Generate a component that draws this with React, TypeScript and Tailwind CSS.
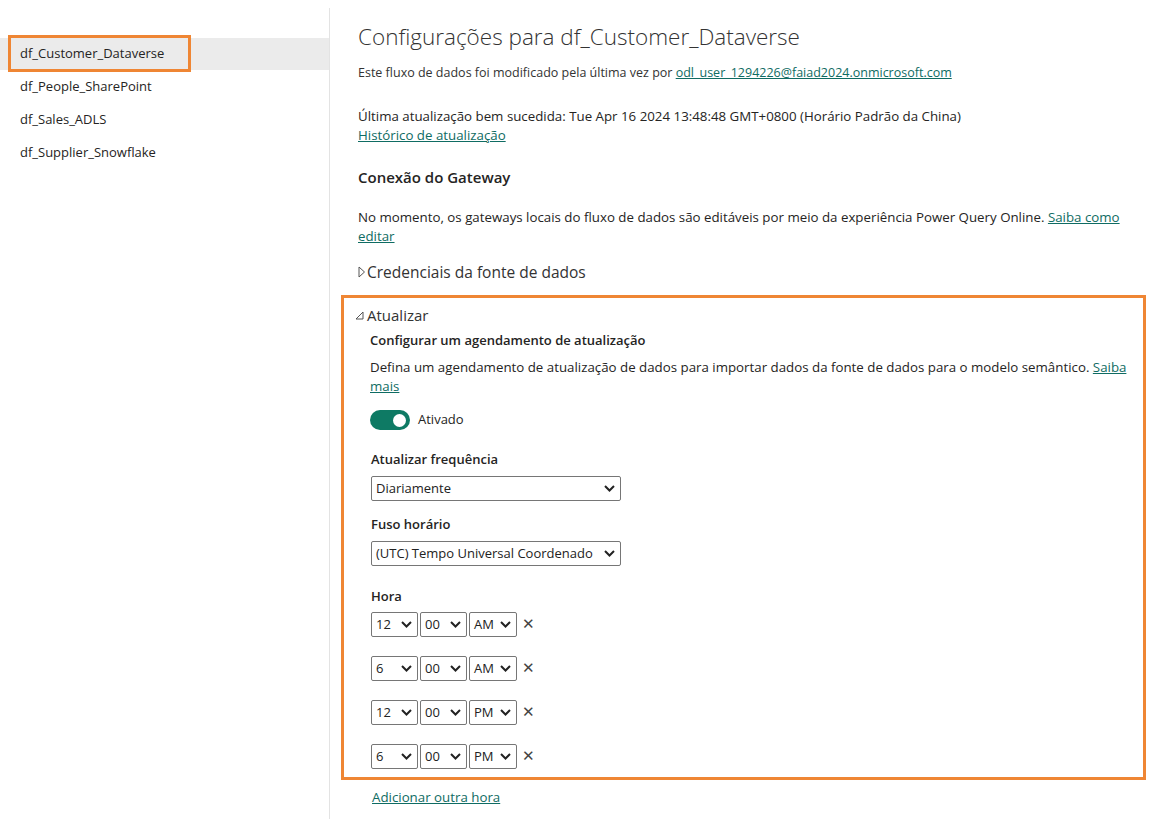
import React from "react";

const font = { fontFamily: '"Segoe UI", "Open Sans", "Noto Sans", sans-serif' };

function Chevron() {
  return (
    <svg width="11" height="7" viewBox="0 0 11 7" className="shrink-0">
      <path d="M1 1 L5.5 5.5 L10 1" fill="none" stroke="#222" strokeWidth="2" />
    </svg>
  );
}

function Sel({ value, w }: { value: string; w: string }) {
  return (
    <div className={`${w} h-[25px] border border-[#767676] rounded-[2px] flex items-center justify-between pl-[4px] pr-[5px] text-[13px] text-[#222] bg-white`}>
      <span>{value}</span>
      <Chevron />
    </div>
  );
}

function TimeRow({ h, p }: { h: string; p: string }) {
  return (
    <div className="flex items-center gap-[2px] h-[25px]">
      <Sel value={h} w="w-[47px]" />
      <Sel value="00" w="w-[47px]" />
      <Sel value={p} w="w-[48px]" />
      <span className="ml-[3px] text-[15px] text-[#444] leading-none -mt-[3px]">✕</span>
    </div>
  );
}

export default function App() {
  const link = "text-[#0f6c63] underline";
  return (
    <div style={font} className="flex w-[1158px] h-[819px] bg-white overflow-hidden text-[#252423]">
      <aside className="w-[330px] shrink-0 relative">
        <div className="absolute right-0 top-[8px] bottom-0 w-px bg-[#e3e3e3]" />
        <div className="pt-[38px] text-[13px] text-[#252423]">
          <div className="h-[32px] bg-[#ebebeb] flex items-center pl-[20px] mr-px">df_Customer_Dataverse</div>
          <div className="h-[33px] flex items-center pl-[20px]">df_People_SharePoint</div>
          <div className="h-[33px] flex items-center pl-[20px]">df_Sales_ADLS</div>
          <div className="h-[33px] flex items-center pl-[20px]">df_Supplier_Snowflake</div>
        </div>
        <div className="absolute left-[8px] top-[35px] w-[183px] h-[37px] border-[3px] border-[#ef8634]" />
      </aside>
      <main className="flex-1 pl-[28px] pr-[30px]">
        <h1 className="text-[22.5px] font-light text-[#333] mt-[22px] leading-[30px]">Configurações para df_Customer_Dataverse</h1>
        <p className="text-[12.5px] mt-[13px] leading-[16px] text-[#333]">
          Este fluxo de dados foi modificado pela última vez por <span className={link}>odl_user_1294226@faiad2024.onmicrosoft.com</span>
        </p>
        <p className="text-[13.3px] mt-[26px] leading-[19px]">
          Última atualização bem sucedida: Tue Apr 16 2024 13:48:48 GMT+0800 (Horário Padrão da China)
        </p>
        <p className={`text-[13.3px] leading-[19px] ${link}`}>Histórico de atualização</p>
        <h2 className="text-[15px] font-semibold mt-[22px] leading-[20px]">Conexão do Gateway</h2>
        <div className="text-[13.3px] mt-[21px] leading-[19px]">
          <p className="whitespace-nowrap">
            No momento, os gateways locais do fluxo de dados são editáveis por meio da experiência Power Query Online. <span className={link}>Saiba como</span>
          </p>
          <p className={link}>editar</p>
        </div>
        <div className="flex items-center mt-[16px] text-[15.5px] leading-[20px] text-[#333]">
          <svg width="8" height="12" viewBox="0 0 8 12" className="mr-[1px]">
            <path d="M1 1 L6.5 6 L1 11 Z" fill="none" stroke="#555" strokeWidth="1" />
          </svg>
          <span>Credenciais da fonte de dados</span>
        </div>
        <section className="-ml-[17px] mt-[13px] w-[805px] h-[485px] border-[3px] border-[#ef8634] pl-[11px] pr-[12px]">
          <div className="flex items-center mt-[7px] text-[15px] leading-[20px] text-[#333]">
            <svg width="9" height="9" viewBox="0 0 9 9" className="mr-[3px]">
              <path d="M8 1 L8 8 L1 8 Z" fill="none" stroke="#555" strokeWidth="1" />
            </svg>
            <span>Atualizar</span>
          </div>
          <div className="pl-[15px]">
            <h3 className="text-[13px] font-semibold mt-[6px] leading-[18px]">Configurar um agendamento de atualização</h3>
            <div className="text-[13.3px] mt-[9px] leading-[19px]">
              <p className="whitespace-nowrap">
                Defina um agendamento de atualização de dados para importar dados da fonte de dados para o modelo semântico. <span className={link}>Saiba</span>
              </p>
              <p className={link}>mais</p>
            </div>
            <div className="flex items-center mt-[14px] h-[20px]">
              <div className="w-[40px] h-[20px] rounded-full bg-[#0e7a64] flex items-center justify-end pr-[4px]">
                <div className="w-[13px] h-[13px] rounded-full bg-white" />
              </div>
              <span className="ml-[8px] text-[13px]">Ativado</span>
            </div>
            <div className="pl-[1px]">
              <h4 className="text-[13px] font-semibold mt-[20px] leading-[18px]">Atualizar frequência</h4>
              <div className="mt-[8px]"><Sel value="Diariamente" w="w-[250px]" /></div>
              <h4 className="text-[13px] font-semibold mt-[14px] leading-[18px]">Fuso horário</h4>
              <div className="mt-[8px]"><Sel value="(UTC) Tempo Universal Coordenado" w="w-[250px]" /></div>
              <h4 className="text-[13px] font-semibold mt-[21px] leading-[18px]">Hora</h4>
              <div className="mt-[7px] flex flex-col gap-[19px]">
                <TimeRow h="12" p="AM" />
                <TimeRow h="6" p="AM" />
                <TimeRow h="12" p="PM" />
                <TimeRow h="6" p="PM" />
              </div>
            </div>
          </div>
        </section>
        <p className={`text-[13.3px] mt-[8px] ml-[14px] leading-[19px] ${link}`}>Adicionar outra hora</p>
      </main>
    </div>
  );
}
